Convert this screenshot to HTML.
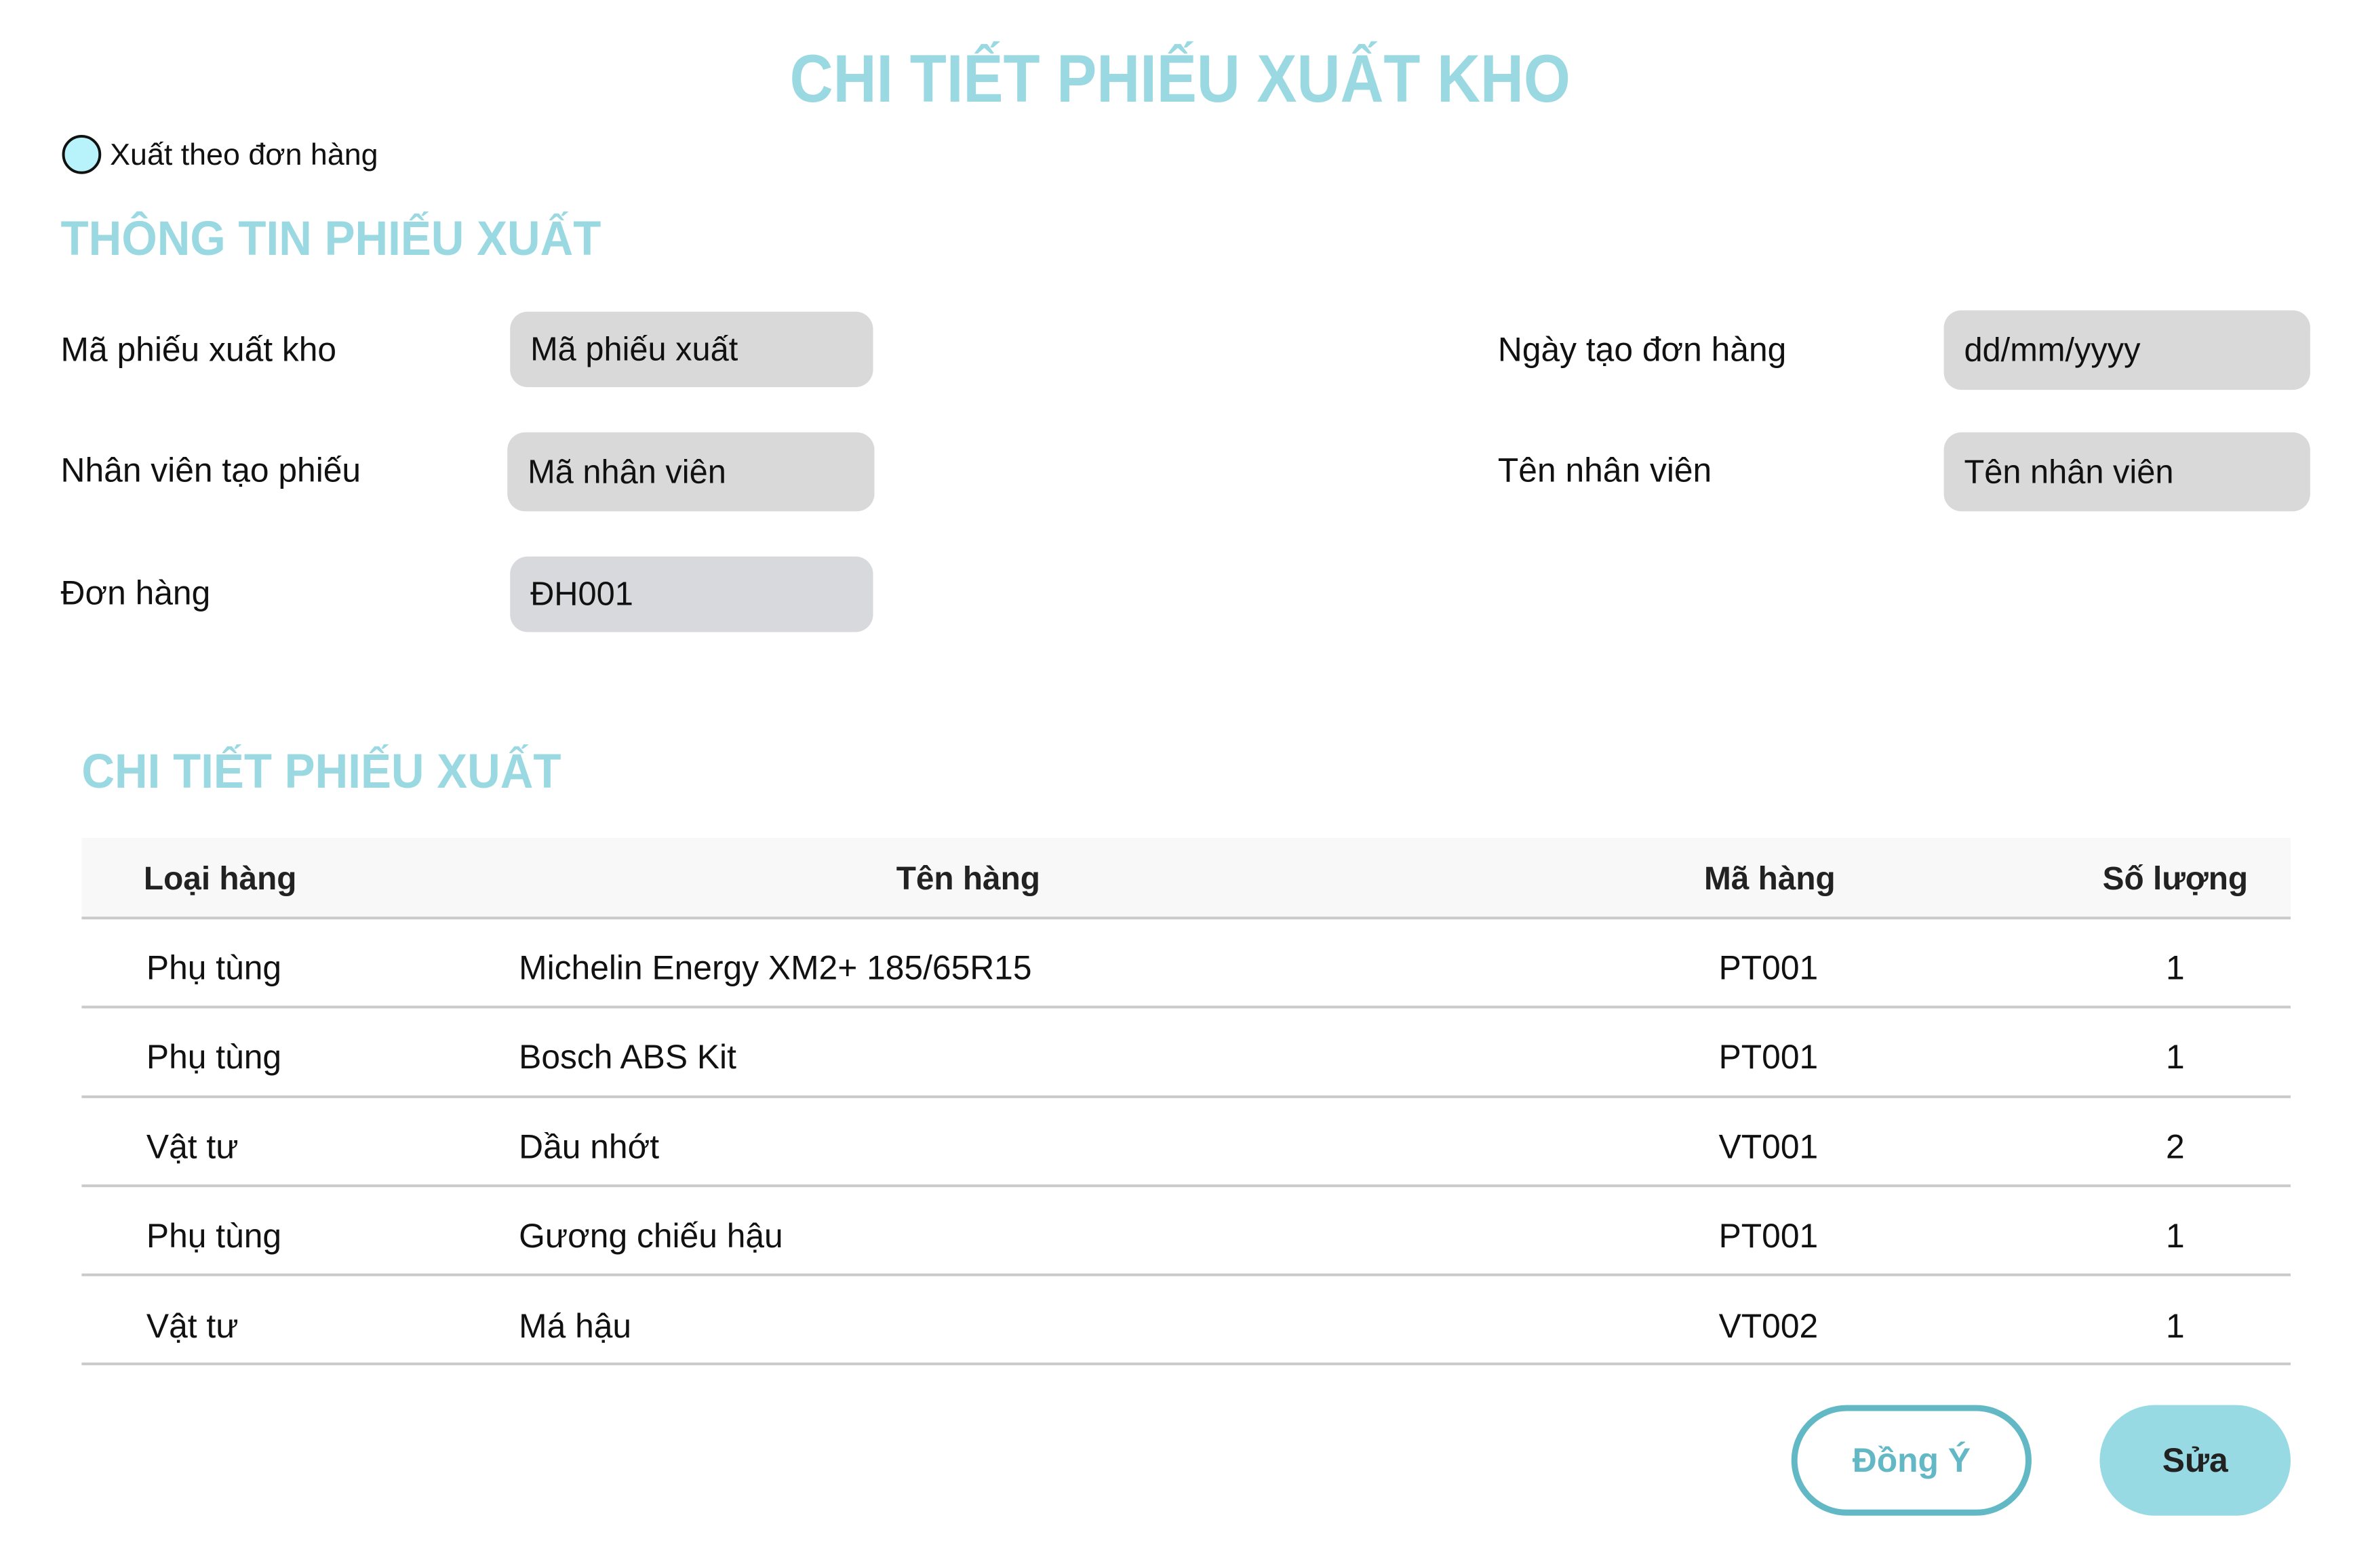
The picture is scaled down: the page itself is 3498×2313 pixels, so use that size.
<!DOCTYPE html>
<html><head><meta charset="utf-8"><style>
*{margin:0;padding:0;box-sizing:border-box}
body{width:3498px;height:2313px;background:#fff;position:relative;overflow:hidden;font-family:"Liberation Sans","DejaVu Sans",sans-serif;color:#111}
#w{position:absolute;left:0;top:0;width:3498px;height:2313px;transform:scale(0.995);transform-origin:0 0}
.a{position:absolute;white-space:nowrap}
.h{color:#9ad9e2;font-weight:bold}
.lbl{font-size:50px;transform:translateY(-50%)}
.inp{position:absolute;background:#d9d9d9;border-radius:26px;font-size:49px;padding-left:30px;display:flex;align-items:center}
.line{position:absolute;left:121px;width:3274px;height:4px;background:#cacaca}
.c{font-size:50px;transform:translateY(-50%)}
.cc{font-size:50px;transform:translate(-50%,-50%)}
.hd{font-size:48px;font-weight:bold;color:#222}
</style></head><body><div id="w">
<div class="a h" style="left:0;width:3498px;text-align:center;top:58px;font-size:100px;line-height:118px;transform:scaleX(0.89)">CHI TIẾT PHIẾU XUẤT KHO</div>
<div class="a" style="left:92px;top:200px;width:58px;height:58px;border-radius:50%;background:#b8f3fb;border:4px solid #111"></div>
<div class="a" style="left:163px;top:229px;font-size:45px;transform:translateY(-50%)">Xuất theo đơn hàng</div>
<div class="a h" style="left:90px;top:354px;font-size:72px;transform:translateY(-50%) scaleX(0.94);transform-origin:0 50%">THÔNG TIN PHIẾU XUẤT</div>

<div class="a lbl" style="left:90px;top:518px">Mã phiếu xuất kho</div>
<div class="inp" style="left:756px;top:462px;width:538px;height:112px">Mã phiếu xuất</div>
<div class="a lbl" style="left:90px;top:697px">Nhân viên tạo phiếu</div>
<div class="inp" style="left:752px;top:641px;width:544px;height:117px">Mã nhân viên</div>
<div class="a lbl" style="left:90px;top:879px">Đơn hàng</div>
<div class="inp" style="left:756px;top:825px;width:538px;height:112px;background:#d8d9dc">ĐH001</div>

<div class="a lbl" style="left:2220px;top:518px">Ngày tạo đơn hàng</div>
<div class="inp" style="left:2881px;top:460px;width:543px;height:118px">dd/mm/yyyy</div>
<div class="a lbl" style="left:2220px;top:697px">Tên nhân viên</div>
<div class="inp" style="left:2881px;top:641px;width:543px;height:117px">Tên nhân viên</div>

<div class="a h" style="left:121px;top:1144px;font-size:72px;transform:translateY(-50%) scaleX(0.94);transform-origin:0 50%">CHI TIẾT PHIẾU XUẤT</div>

<div class="a" style="left:121px;top:1242px;width:3274px;height:119px;background:#f8f8f8"></div>
<div class="a c hd" style="left:213px;top:1303px">Loại hàng</div>
<div class="a cc hd" style="left:1435px;top:1303px">Tên hàng</div>
<div class="a cc hd" style="left:2623px;top:1303px">Mã hàng</div>
<div class="a cc hd" style="left:3224px;top:1303px">Số lượng</div>
<div class="line" style="top:1359px"></div>
<div class="line" style="top:1491px"></div>
<div class="line" style="top:1624px"></div>
<div class="line" style="top:1756px"></div>
<div class="line" style="top:1888px"></div>
<div class="line" style="top:2020px"></div>

<div class="a c" style="left:217px;top:1435px">Phụ tùng</div><div class="a c" style="left:769px;top:1435px">Michelin Energy XM2+ 185/65R15</div><div class="a cc" style="left:2621px;top:1435px">PT001</div><div class="a cc" style="left:3224px;top:1435px">1</div>
<div class="a c" style="left:217px;top:1567px">Phụ tùng</div><div class="a c" style="left:769px;top:1567px">Bosch ABS Kit</div><div class="a cc" style="left:2621px;top:1567px">PT001</div><div class="a cc" style="left:3224px;top:1567px">1</div>
<div class="a c" style="left:217px;top:1700px">Vật tư</div><div class="a c" style="left:769px;top:1700px">Dầu nhớt</div><div class="a cc" style="left:2621px;top:1700px">VT001</div><div class="a cc" style="left:3224px;top:1700px">2</div>
<div class="a c" style="left:217px;top:1832px">Phụ tùng</div><div class="a c" style="left:769px;top:1832px">Gương chiếu hậu</div><div class="a cc" style="left:2621px;top:1832px">PT001</div><div class="a cc" style="left:3224px;top:1832px">1</div>
<div class="a c" style="left:217px;top:1966px">Vật tư</div><div class="a c" style="left:769px;top:1966px">Má hậu</div><div class="a cc" style="left:2621px;top:1966px">VT002</div><div class="a cc" style="left:3224px;top:1966px">1</div>

<div class="a" style="left:2655px;top:2083px;width:356px;height:164px;border:9px solid #62b8c4;border-radius:82px;display:flex;align-items:center;justify-content:center;color:#62b8c4;font-weight:bold;font-size:50px">Đồng Ý</div>
<div class="a" style="left:3112px;top:2083px;width:283px;height:164px;background:#98dae3;border-radius:82px;display:flex;align-items:center;justify-content:center;color:#222;font-weight:bold;font-size:50px">Sửa</div>
</div></body></html>
